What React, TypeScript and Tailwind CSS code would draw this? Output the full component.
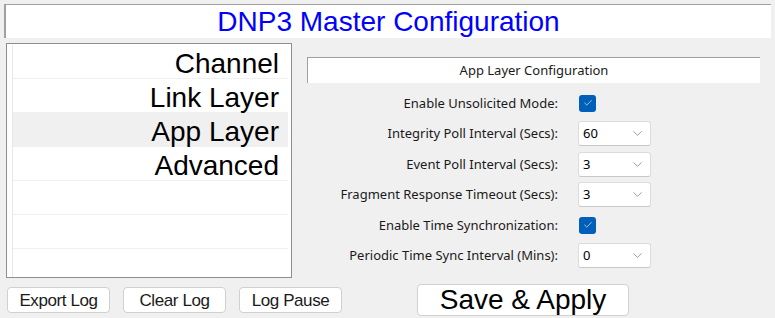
import { Check, ChevronDown } from 'lucide-react'

const navItems = ['Channel', 'Link Layer', 'App Layer', 'Advanced', '', '', '']

const fields: { label: string, kind: 'check' | 'select', value?: string }[] = [
	{ label: 'Enable Unsolicited Mode:', kind: 'check' },
	{ label: 'Integrity Poll Interval (Secs):', kind: 'select', value: '60' },
	{ label: 'Event Poll Interval (Secs):', kind: 'select', value: '3' },
	{ label: 'Fragment Response Timeout (Secs):', kind: 'select', value: '3' },
	{ label: 'Enable Time Synchronization:', kind: 'check' },
	{ label: 'Periodic Time Sync Interval (Mins):', kind: 'select', value: '0' },
]

const LogButton = ({ children }: any) => (
	<button className="w-[103px] h-[26px] bg-white border border-[#d0d0d0] rounded-[4px] text-[17px] text-[#1a1a1a] leading-none tracking-[-0.4px]">
		{children}
	</button>
)

export default function App() {
	return (
		<div className="w-[775px] h-[318px] bg-[#f0f0f0] overflow-hidden font-['Liberation_Sans',Arial,sans-serif]">
			<div className="mx-[4px] pt-[4px]">
				<div className="h-[34px] bg-white border-t border-l-2 border-[#a0a0a0] flex items-center justify-center text-[28px] text-[#0000ff] leading-none">
					DNP3 Master Configuration
				</div>
			</div>

			<div className="flex mt-[5px]">
				<div className="w-[286px] h-[235px] ml-[6px] shrink-0 bg-white border border-[#8a8f98] pl-[5px] pr-[3px] pt-[1px]">
					<div className="h-full border-l border-[#e8e8e8]">
						{navItems.map((item, i) => (
							<div
								key={i}
								className={`h-[34px] border-b border-[#f0f0f0] flex items-center justify-end pt-[4px] pr-[9px] text-[28px] text-black leading-none ${item === 'App Layer' ? 'bg-[#f0f0f0]' : ''}`}
							>
								{item}
							</div>
						))}
					</div>
				</div>

				<div className="flex flex-col ml-[15px] mt-[14px] w-[453px]">
					<div className="h-[26px] bg-white border-t border-l border-[#a0a0a0] flex items-center justify-center text-[13px] text-[#1a1a1a] font-['Noto_Sans',sans-serif]">
						App Layer Configuration
					</div>
					<div className="flex flex-col mt-[5px]">
						{fields.map((f) => (
							<div key={f.label} className="h-[30.5px] flex items-center">
								<div className="w-[251px] text-right text-[13px] text-[#1a1a1a] font-['Noto_Sans',sans-serif]">
									{f.label}
								</div>
								<div className="ml-[20px]">
									{f.kind === 'check' ? (
										<div className="ml-[1px] w-[17px] h-[17px] rounded-[3px] bg-[#005fb8] flex items-center justify-center">
											<Check size={10} strokeWidth={1.5} color="white" />
										</div>
									) : (
										<div className="w-[73px] h-[25px] bg-white border border-[#dcdcdc] border-b-[#c8c8c8] rounded-[3px] flex items-center justify-between pl-[4px] pr-[5px] text-[13px] text-black font-['Noto_Sans',sans-serif]">
											<span>{f.value}</span>
											<ChevronDown size={15} strokeWidth={1} color="#606060" />
										</div>
									)}
								</div>
							</div>
						))}
					</div>
				</div>
			</div>

			<div className="flex items-center h-[32px] mt-[6px] pl-[7px]">
				<div className="flex gap-[13px]">
					<LogButton>Export Log</LogButton>
					<LogButton>Clear Log</LogButton>
					<LogButton>Log Pause</LogButton>
				</div>
				<button className="ml-[75px] w-[212px] h-[32px] bg-white border border-[#d0d0d0] rounded-[4px] text-[28px] leading-none text-black">
					Save &amp; Apply
				</button>
			</div>
		</div>
	)
}
